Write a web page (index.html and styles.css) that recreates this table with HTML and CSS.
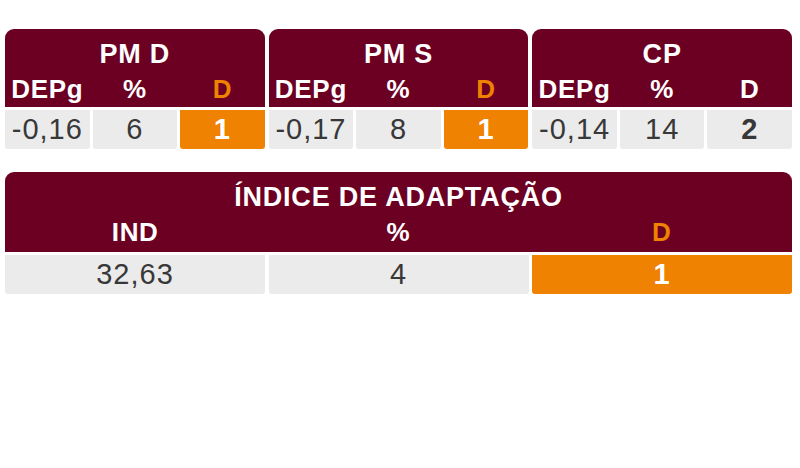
FILE: index.html
```html
<!DOCTYPE html>
<html lang="pt">
<head>
<meta charset="utf-8">
<link rel="stylesheet" href="styles.css">
</head>
<body>
<div class="page">
  <div class="top-row">
    <div class="card">
      <div class="head">
        <div class="title">PM D</div>
        <div class="labels"><span>DEPg</span><span>%</span><span class="hl">D</span></div>
      </div>
      <div class="cells"><span class="cell">-0,16</span><span class="cell">6</span><span class="cell orange">1</span></div>
    </div>
    <div class="card">
      <div class="head">
        <div class="title">PM S</div>
        <div class="labels"><span>DEPg</span><span>%</span><span class="hl">D</span></div>
      </div>
      <div class="cells"><span class="cell">-0,17</span><span class="cell">8</span><span class="cell orange">1</span></div>
    </div>
    <div class="card">
      <div class="head">
        <div class="title">CP</div>
        <div class="labels"><span>DEPg</span><span>%</span><span>D</span></div>
      </div>
      <div class="cells"><span class="cell">-0,14</span><span class="cell">14</span><span class="cell bold">2</span></div>
    </div>
  </div>
  <div class="card wide">
    <div class="head">
      <div class="title">ÍNDICE DE ADAPTAÇÃO</div>
      <div class="labels"><span>IND</span><span>%</span><span class="hl">D</span></div>
    </div>
    <div class="cells"><span class="cell">32,63</span><span class="cell">4</span><span class="cell orange">1</span></div>
  </div>
</div>
</body>
</html>
```
FILE: styles.css
```css
* { box-sizing: border-box; }
html, body { margin: 0; padding: 0; background: #ffffff; }
body { font-family: "Liberation Sans", Arial, sans-serif; }
.page {
  width: 787px;
  margin: 29px 0 0 5px;
  display: flex;
  flex-direction: column;
  gap: 23px;
}
.top-row {
  display: grid;
  grid-template-columns: repeat(3, 1fr);
  gap: 4px;
}
.card {
  display: flex;
  flex-direction: column;
  gap: 3px;
}
.head {
  background: #6c0022;
  border-radius: 9px 9px 0 0;
  color: #ffffff;
  font-weight: bold;
  font-size: 26px;
  padding-top: 8px;
  height: 78px;
}
.wide .head { height: 80px; }
.title {
  text-align: center;
  font-size: 27px;
  letter-spacing: 0.8px;
  line-height: 34px;
}
.labels {
  display: grid;
  grid-template-columns: repeat(3, 1fr);
  gap: 3px;
  line-height: 36px;
  letter-spacing: 0.7px;
  text-align: center;
}
.hl { color: #ef8200; }
.cells {
  display: grid;
  grid-template-columns: repeat(3, 1fr);
  gap: 3px;
}
.wide .cells { column-gap: 3.5px; }
.cell {
  background: #ebebeb;
  color: #383838;
  font-size: 29px;
  letter-spacing: 1px;
  line-height: 39px;
  height: 39px;
  text-align: center;
  border-radius: 0 0 3px 3px;
}
.cell.orange {
  background: #ef8200;
  color: #ffffff;
  font-weight: bold;
}
.cell.bold { font-weight: bold; }
```
